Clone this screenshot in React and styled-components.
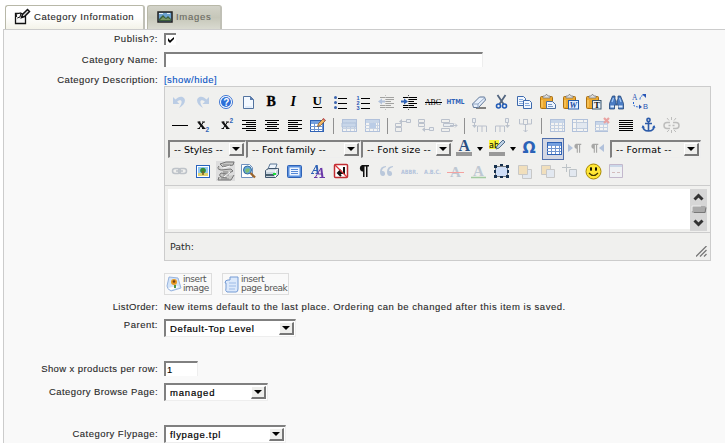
import React from "react";
import styled, { createGlobalStyle } from "styled-components";

const Global = createGlobalStyle`
  * { box-sizing: border-box; }
  html, body { margin: 0; background: #fff; overflow: hidden; }
  svg { display: block; flex: none; }
`;
const Page = styled.main`
  width: 725px;
  height: 443px;
  overflow: hidden;
  padding: 5px 0 0 3px;
  display: flex;
  flex-direction: column;
  font: 9.5px "Liberation Sans", Arial, sans-serif;
  letter-spacing: 0.5px;
  color: #2a2a2a;
  -webkit-text-stroke: 0.12px currentColor;
`;
const Tabs = styled.nav`
  display: flex;
  gap: 2px;
  height: 24px;
  padding-left: 2px;
`;
const Tab = styled.div`
  width: ${(p) => p.$w}px;
  height: 24px;
  display: flex;
  align-items: center;
  gap: ${(p) => p.$gap}px;
  padding-left: ${(p) => (p.$active ? 8 : 9)}px;
  padding-bottom: 2px;
  white-space: nowrap;
  letter-spacing: ${(p) => p.$spacing}px;
  border: 1px solid #b8b8a8;
  border-right: 2px solid #c0c0b6;
  border-bottom: 0;
  border-radius: 3px 3px 0 0;
  color: ${(p) => (p.$active ? "#2a2a2a" : "#6a6a62")};
  background: ${(p) => (p.$active ? "linear-gradient(#fff, #fff 45%, #f4f3e9)" : "linear-gradient(#d3d3c9, #c6c7b9 50%, #d9dad0)")};
`;
const Panel = styled.section`
  flex: 1;
  border: solid #ccc;
  border-width: 1px 0 0 1px;
  background: #f9f9f9;
  display: flex;
  flex-direction: column;
`;
const Row = styled.div`
  display: grid;
  grid-template-columns: 154px 1fr;
  column-gap: 6px;
  flex: none;
  height: ${(p) => p.$h}px;
`;
const Label = styled.label`
  text-align: right;
  line-height: 12px;
  padding-top: ${(p) => p.$top || 0}px;
  letter-spacing: ${(p) => p.$spacing ?? 0.5}px;
  white-space: nowrap;
`;
const Field = styled.div`
  padding-top: ${(p) => p.$top || 0}px;
  line-height: 12px;
  letter-spacing: ${(p) => p.$spacing ?? 0.52}px;
  white-space: nowrap;
`;
const Check = styled.div`
  width: 12px;
  height: 12px;
  background: #fff;
  border: solid #808080;
  border-width: 2px 0 0 2px;
`;
const TextBox = styled.div`
  width: ${(p) => p.$w}px;
  height: 15px;
  padding: 1px 1px 0;
  line-height: 12px;
  color: #000;
  background: #fff;
  border: 2px solid #808080;
  border-right: 1px solid #eee;
  border-bottom: 0;
`;
const Link = styled.a`
  color: #0b55c4;
`;
const SelectBox = styled.div`
  flex: none;
  width: ${(p) => p.$w}px;
  height: 18px;
  display: flex;
  align-items: center;
  justify-content: space-between;
  padding-left: 4px;
  color: #000;
  background: ${(p) => (p.$flat ? "#f0f0ee" : "#fff")};
  border: 2px solid #808080;
  border-right: 1px solid #eee;
  border-bottom: 1px solid #eee;
  font-family: ${(p) => (p.$flat ? '"DejaVu Sans", Verdana, sans-serif' : "inherit")};
  letter-spacing: ${(p) => p.$spacing}px;
  -webkit-text-stroke-width: ${(p) => (p.$flat ? 0 : 0.2)}px;
`;
const ArrowButton = styled.span`
  width: 15px;
  height: 13px;
  margin-right: 1px;
  display: flex;
  align-items: center;
  justify-content: center;
  background: #eeeeec;
  border: 1px solid #fff;
  border-right: 2px solid #777;
  border-bottom: 2px solid #777;
`;
const Editor = styled.div`
  width: 547px;
  height: 175px;
  border: 1px solid #ccc;
  background: #f0f0ee;
  display: flex;
  flex-direction: column;
`;
const Toolbar = styled.div`
  height: 98px;
  padding: 4px 0 0 3px;
`;
const ToolRow = styled.div`
  display: flex;
  height: 23px;
  align-items: center;
`;
const Tool = styled.span`
  width: 23px;
  height: 23px;
  flex: none;
  opacity: ${(p) => (p.$off ? 0.32 : 1)};
  -webkit-text-stroke-width: 0;
  letter-spacing: 0;
`;
const Split = styled.span`
  width: 8px;
  height: 16px;
  display: flex;
  justify-content: center;
  &::before { content: ""; width: 1px; background: #909090; }
`;
const Drop = styled.span`
  width: 7px;
  margin-right: 3px;
  display: flex;
  justify-content: center;
`;
const ActiveTool = styled.span`
  width: 22px;
  height: 22px;
  flex: none;
  display: flex;
  align-items: center;
  justify-content: center;
  overflow: hidden;
  border: 1px solid #506fac;
  background: #d3d7e3;
`;
const EditArea = styled.div`
  height: 48px;
  padding: 3px;
  border: solid #ccc;
  border-width: 1px 0;
  display: flex;
`;
const Canvas = styled.div`
  flex: 1;
  background: #fff;
`;
const Status = styled.div`
  flex: 1;
  display: flex;
  justify-content: space-between;
  padding: 8px 3px 3px 5px;
  font: 9.5px/11px "DejaVu Sans", sans-serif;
  letter-spacing: 0;
  -webkit-text-stroke-width: 0;
`;
const Grip = styled.span`
  align-self: flex-end;
`;
const Inserts = styled.div`
  display: flex;
  gap: 10px;
  padding: 12px 0 0 160px;
  height: 39px;
  flex: none;
`;
const InsertButton = styled.button`
  width: ${(p) => p.$w}px;
  height: 22px;
  padding: 0 0 1px 1px;
  display: flex;
  align-items: center;
  gap: 1px;
  border: 1px solid #ddd;
  background: #f9f9f9;
  color: #555;
  text-align: left;
  white-space: pre;
  font: 9px/9px "DejaVu Sans", sans-serif;
  letter-spacing: -0.45px;
  -webkit-text-stroke-width: 0;
`;

const Triangle = ({ w = 8 }) => (
  <svg width={w} height="4" viewBox="0 0 8 4" preserveAspectRatio="none"><path d="M0 0h8L4 4z" fill="#000" /></svg>
);
const Select = ({ children, ...rest }) => (
  <SelectBox {...rest}>{children}<ArrowButton><Triangle /></ArrowButton></SelectBox>
);

const B = "#2f62b5";
const L = "#c5daf7";
const hlines = (list, color = "#000") => list.map(([x, y, w], i) => <rect key={i} x={x} y={y} width={w} height="1" fill={color} shapeRendering="crispEdges" />);
const grid = (x = 5, y = 6, w = 14, h = 12) => (
  <g>
    <rect x={x + 0.5} y={y + 0.5} width={w} height={h} fill="#fff" stroke={B} />
    <path d={`M${x + 1} ${y + 1}h${w - 1}v3h-${w - 1}z`} fill="#75a0df" />
    <path d={`M${x + 4.5} ${y + 3}v${h - 3}m4-${h - 3}v${h - 3}m4-${h - 3}v${h - 3}M${x} ${y + 6.5}h${w}m0 3h-${w}`} stroke="#6f94cf" fill="none" />
  </g>
);
const board = (
  <g>
    <rect x="4.5" y="5.5" width="12" height="12" rx="1" fill="#eda92f" stroke="#a96f12" />
    <path d="M7 6.5V5h2l1-1.5h1L12 5h2v2H7z" fill="#ddd" stroke="#777" strokeWidth=".7" />
    <path d="M6 9v7" stroke="#ffd677" />
  </g>
);
const pilcrow = <path d="M17 5H10a3.500 3.500 0 0 0 0 6.500h1V17h1.500V6.500H14V17h1.500V6.500H17z" fill="#111" />;
const cells = (rest) => <g fill="#dce9fa" stroke="#4c6187">{rest}</g>;

const art = {
  undo: <path d="M5 6v7h6.500l-2.400-2.200C13 7.500 16 10 11 17c6-3 8-9 3.500-11-2.500-.8-5 .4-7 2.600z" fill="#4e86d4" />,
  redo: <path d="M18 6v7h-6.500l2.400-2.200C10 7.500 7 10 12 17c-6-3-8-9-3.500-11 2.500-.8 5 .4 7 2.600z" fill="#4e86d4" />,
  help: <g><circle cx="12" cy="11" r="6.500" fill="#fff" stroke="#3d74d2" /><circle cx="12" cy="11" r="5" fill="#2d6fd8" /><text x="9.200" y="14.800" fontSize="10" fontWeight="bold" fill="#fff">?</text></g>,
  doc: <g><path d="M6.500 5.500h7l3 3v9h-10z" fill="#f4f9ff" stroke="#53739f" /><path d="M13 5v4h4z" fill="#5c7dad" /><path d="M8 16h7" stroke="#cfe0f5" /></g>,
  bold: <text x="6.500" y="15" fontFamily="Liberation Serif" fontSize="14" fontWeight="bold" fill="#000" stroke="#000" strokeWidth=".3">B</text>,
  italic: <text x="7.500" y="15" fontFamily="Liberation Serif" fontSize="14" fontStyle="italic" fontWeight="bold" fill="#000">I</text>,
  under: <g><text x="6.500" y="14" fontFamily="Liberation Serif" fontSize="13" fontWeight="bold" fill="#000">U</text>{hlines([[7, 16, 9]])}</g>,
  ul: <g>{hlines([[9, 7, 9], [9, 12, 9], [9, 17, 9]])}<g fill="#3c64ae"><circle cx="6.500" cy="6.500" r="1.500" /><circle cx="6.500" cy="11.500" r="1.500" /><circle cx="6.500" cy="16.500" r="1.500" /></g></g>,
  ol: <g>{hlines([[9, 7, 9], [9, 12, 9], [9, 17, 9]])}<g fontSize="5.500" fontWeight="bold" fill="#2855b5"><text x="4.500" y="8.500">1</text><text x="4.500" y="13.500">2</text><text x="4.500" y="18.500">3</text></g></g>,
  outdent: <g>{hlines([[5, 6, 14], [11, 8, 8], [11, 10, 5], [11, 12, 8], [5, 14, 11], [5, 16, 14]])}<path d="M3 10.500l4-3v2h3v2H7v2z" fill={B} /><path d="M10.500 4v15" stroke="#555" strokeDasharray="1" /></g>,
  indent: <g>{hlines([[5, 6, 14], [11, 8, 8], [11, 10, 5], [11, 12, 8], [5, 14, 11], [5, 16, 14]])}<path d="M10 10.500l-4-3v2H3v2h3v2z" fill={B} /><path d="M10.500 4v15" stroke="#555" strokeDasharray="1" /></g>,
  strike: <g><text x="4" y="14" fontFamily="Liberation Serif" fontSize="8.500" textLength="16" lengthAdjust="spacingAndGlyphs" fill="#000">ABC</text>{hlines([[4, 11, 17]])}</g>,
  html: <text x="2.500" y="13" fontFamily="DejaVu Sans" fontSize="7" fontWeight="bold" textLength="18" lengthAdjust="spacingAndGlyphs" fill="#2d62b8">HTML</text>,
  eraser: <g><path d="M9 17h10" stroke="#111" /><path d="M5.500 13l7-7h5l1 3-7 7.500h-5z" fill="#e7f0fc" stroke="#5e7596" /><path d="M5.500 13h5.500l7-6.500M11 13v3.500" fill="none" stroke="#8fa5c3" /></g>,
  cut: <g fill="none"><path d="M7.500 4l6 9M15.500 4l-6 9" stroke="#52657f" strokeWidth="1.800" /><circle cx="8.500" cy="15" r="2" stroke="#225cb7" strokeWidth="1.600" /><circle cx="14.500" cy="15" r="2" stroke="#225cb7" strokeWidth="1.600" /></g>,
  copy: <g fill="#f2f8ff" stroke="#3d69ac"><path d="M4.500 5.500h6l2 2v7h-8z" /><path d="M6 8.500h4m-4 2h4m-4 2h4" stroke="#86a9dc" /><path d="M10.500 9.500h6l2 2v6h-8z" /><path d="M12 12.500h4m-4 2h5" stroke="#86a9dc" /></g>,
  paste: <g>{board}<path d="M10.500 10.500h6l3 3v4h-9z" fill="#edf5ff" stroke="#4b6d9e" /><path d="M12 13.500h4m-4 2h5" stroke="#7897c2" /></g>,
  word: <g>{board}<rect x="9.500" y="9.500" width="10" height="8.500" fill="#e5f0ff" stroke="#245dac" /><text x="10.500" y="17" fontFamily="Liberation Serif" fontSize="8.500" fontWeight="bold" fontStyle="italic" fill="#164c9f">W</text></g>,
  plain: <g>{board}<rect x="10.500" y="9.500" width="8.500" height="8.500" fill="#edf2f7" stroke="#38536b" /><text x="12" y="17" fontFamily="Liberation Serif" fontSize="9" fontWeight="bold" fill="#111">T</text></g>,
  find: <g fill="#4a7cc4" stroke="#234679" strokeWidth=".8"><path d="M7.500 5h2.500v3l1 2v3h1v-3l1-2V5h2.500l3 7.500V18h-5v-4h-4v4h-5v-5.500z" /><path d="M5.500 15.500h3.500m4.500 0h4" stroke="#d8e9ff" strokeWidth="2" /><path d="M7 11l1.500-4m6 0l1.500 4" stroke="#a5caf6" strokeWidth="1.200" /></g>,
  replace: <g fill="#2855b5"><text x="4" y="9" fontFamily="Liberation Serif" fontSize="7.500">A</text><text x="15" y="18" fontSize="7.500">B</text><path d="M12 8.500q0-4 4-4M5.500 11v3q1 2 7 2" fill="none" stroke="#2263d2" strokeDasharray="2 1" /><path d="M14 3h4v4zM11 13.500l3 2.500-3 2z" /></g>,
  hr: hlines([[4, 11, 16]]),
  sub: <g><path d="M6.500 8h3m1.500 0h3M6.500 14.500h2.500m2 0h3.500" stroke="#111" /><path d="M7.500 8l5.500 6.500" stroke="#111" strokeWidth="2" /><path d="M12.500 8L8 14.500" stroke="#111" /><text x="14.500" y="18" fontSize="6.500" fontWeight="bold" fill={B}>2</text></g>,
  sup: <g><path d="M7.500 8h3m1.500 0h3M7.500 14.500h2.500m2 0h3.500" stroke="#111" /><path d="M8.500 8l5.500 6.500" stroke="#111" strokeWidth="2" /><path d="M13.500 8L9 14.500" stroke="#111" /><text x="15.500" y="9" fontSize="6.500" fontWeight="bold" fill={B}>2</text></g>,
  right: hlines([[5, 6, 14], [9, 8, 10], [5, 10, 14], [9, 12, 10], [5, 14, 14], [9, 16, 10]]),
  center: hlines([[5, 6, 14], [7, 8, 10], [5, 10, 14], [7, 12, 10], [5, 14, 14], [7, 16, 10]]),
  left: hlines([[5, 6, 14], [5, 8, 10], [5, 10, 14], [5, 12, 10], [5, 14, 14], [5, 16, 10]]),
  full: hlines([[5, 6, 14], [5, 8, 14], [5, 10, 14], [5, 12, 14], [5, 14, 14], [5, 16, 14]]),
  tableEdit: <g>{grid(4, 6, 13, 11)}<path d="M11.500 12.500l1-3 5-5 2 2-5 5z" fill="#efb664" stroke="#7c5535" strokeWidth=".8" /><path d="M17 4.500l2 2" stroke="#cc5a61" strokeWidth="1.500" /></g>,
  rowProp: <g>{grid(5, 5, 14, 12)}<path d="M5 9h14v4H5z" fill="#75a0df" stroke={B} /></g>,
  cellProp: <g>{grid(5, 5, 14, 12)}<path d="M10 9h6v5h-6z" fill="#4c83d6" /></g>,
  before: cells(<><path d="M4.500 9.500h6v3h-6zm0 4h6v4h-6zM11 7.500h4" fill="none" /><path d="M15.500 5.500h4v3h-4z" /><path d="M11 5v5L8 7.500z" fill="#4c6187" stroke="none" /></>),
  after: cells(<><path d="M4.500 5.500h6v3h-6zm0 4h6v3h-6zM11 15.500h4" fill="none" /><path d="M15.500 13.500h4v3h-4z" /><path d="M11 13v5l-3-2.500z" fill="#4c6187" stroke="none" /></>),
  rowDel: cells(<><path d="M4.500 5.500h8v3h-8zm0 9h8v3h-8z" fill="none" /><path d="M6.500 9.500h10v3h-10z" /><path d="M13 11.500h7m-2-2l2 2-2 2" fill="none" /></>),
  colBefore: cells(<><path d="M9.500 18v-6h4.500v6m0-6h4.500v6" fill="none" /><path d="M4.500 4.500h3v4h-3zM6.500 9v3" /><path d="M4 11h5l-2.500 3z" fill="#4c6187" stroke="none" /></>),
  colAfter: cells(<><path d="M4.500 18v-6h4.500v6m0-6h4.500v6" fill="none" /><path d="M14.500 4.500h3v4h-3zM16.500 9v3" /><path d="M14 11h5l-2.500 3z" fill="#4c6187" stroke="none" /></>),
  colDel: cells(<><path d="M5.500 5v5h4V5m4 0v5h4V5" fill="none" /><path d="M9.500 5.500h4v5h-4zM11.500 11v7m-2-2l2 2 2-2" fill="none" /></>),
  table: grid(5, 5, 14, 12),
  merge: <g><rect x="4.500" y="5.500" width="15" height="12" fill="#fff" stroke={B} /><path d="M5 8.500h14M8.500 6v11M15.500 6v3m0 6v3M5 14.500h14" stroke="#6085bd" /><path d="M9 9h10v5H9z" fill="#c5daf7" /></g>,
  tableDel: <g>{grid(4, 7, 12, 10)}<path d="M13 4l5 5m0-5l-5 5" stroke="#d00" strokeWidth="2.200" /></g>,
  anchor: <g fill="none" stroke="#2b5aa8" strokeWidth="1.600"><circle cx="11.500" cy="6" r="1.600" /><path d="M11.500 8v9M8 9.500h7M6 12q0 5 5.500 5t5.500-5" /><path d="M4.500 14l1.300-3 2.200 2.500M15 13.500l2.200-2.500 1.300 3" fill={B} stroke="none" /></g>,
  unlink: <g fill="none" stroke="#555" strokeWidth="1.500"><path d="M10 8.500H7a3 3 0 0 0 0 6h3M13 8.500h3a3 3 0 0 1 0 6h-3M8.500 11.500h2m2 0h2" /><path d="M11.500 3v3M7 4l2 2.500M16 4l-2 2.500M11.500 16v3M7 18l2-2M16 18l-2-2" strokeWidth="1" /></g>,
  link: <g fill="none" stroke="#56677d" strokeWidth="1.500"><rect x="4.500" y="8.500" width="8" height="5" rx="2.500" /><rect x="10.500" y="8.500" width="8" height="5" rx="2.500" /><path d="M8 11h7" /></g>,
  image: <g><rect x="5.500" y="5.500" width="13" height="12" fill="#fff" stroke="#2862bd" /><path d="M7 7h10v9H7z" fill="#91c8f1" /><path d="M7 13h10v3H7z" fill="#dfd36d" /><circle cx="12" cy="10.500" r="2.800" fill="#368e39" /><path d="M12 11v4" stroke="#7c5d25" strokeWidth="1.500" /></g>,
  cleanup: <g><path d="M2 1h19v20H2z" fill="#ddd" /><path d="M6 4q5-3 14-2l-1 3-10 2zM5 6q-3 3 2 4l10-1 2 2-6 3-6-1q-3 2 0 4l6 1M5 17l-1 3h13l3-5" fill="#c8c8c6" stroke="#777" /><path d="M9 5h8m-8 7h5m-5 3h6M7 19h8" fill="none" stroke="#888" /><path d="M9 8l7-2M10 17l6-5" stroke="#fff" /></g>,
  preview: <g><path d="M4.500 4.500h8l3 3v10h-11z" fill="#fff" stroke="#6f91be" /><circle cx="10.500" cy="10" r="4" fill="#63a8dc" stroke="#376c99" /><path d="M8 10q2-3 5-1l-1 3-3 1z" fill="#7fbd75" /><path d="M13.500 13l4.500 4.500" stroke="#9b642b" strokeWidth="2.300" /></g>,
  print: <g><path d="M8 9l2-5h7l-2 6z" fill="#eef5fc" stroke="#5c7897" /><path d="M5.500 10.500l3-2h10v6l-3 3h-10z" fill="#c9d4de" stroke="#40566d" /><path d="M6 11h9l3-2M15.500 11v6" stroke="#fff" fill="none" /><path d="M6 14h8v2H6z" fill="#48606e" /><rect x="13" y="13" width="3" height="2" fill="#19dc36" /></g>,
  layer: <g><rect x="4.500" y="5.500" width="14" height="12" rx="1" fill="#5b91df" stroke={B} /><rect x="6.500" y="7.500" width="10" height="8" fill="#eef5ff" />{hlines([[8, 9, 7], [8, 11, 7], [8, 13, 7]], "#5588d6")}</g>,
  style: <g fill="none"><path d="M5 13.500h3m1.500 0h3.500M6 13l4.500-8M7.500 10.500h4" stroke="#2f62b5" /><path d="M10.700 5l1 8.500" stroke="#2f62b5" strokeWidth="2" /><path d="M8 17.500h3.500m2 0h5.500M9.500 17l5.500-9M12 14h4" stroke="#6a38a8" /><path d="M15.200 8l1.300 9.500" stroke="#6a38a8" strokeWidth="2" /></g>,
  nonbreak: <g><rect x="5.500" y="4.500" width="13" height="13" rx="1" fill="#fff" stroke="#c12d32" strokeWidth="1.500" /><path d="M15 7v6H9m3-3l-3 3 3 3" fill="none" stroke="#111" strokeWidth="2" /><path d="M6 5l12 12" stroke="#db3438" strokeWidth="1.300" /></g>,
  para: pilcrow,
  quote: <g fill="#4b76b5"><path d="M11 6q-6 0-6 6 0 4 3 4a2.500 2.500 0 1 0-1-5q0-3 4-4zM18 6q-6 0-6 6 0 4 3 4a2.500 2.500 0 1 0-1-5q0-3 4-4z" /></g>,
  abbr: <text x="3" y="14" fontFamily="DejaVu Sans" fontSize="6" fontWeight="bold" textLength="17" lengthAdjust="spacingAndGlyphs" fill={B}>ABBR.</text>,
  acro: <text x="3" y="14" fontFamily="DejaVu Sans" fontSize="6" fontWeight="bold" textLength="17" lengthAdjust="spacingAndGlyphs" fill={B}>A.B.C.</text>,
  del: <g><text x="6" y="17" fontFamily="Liberation Serif" fontSize="15" fontWeight="bold" fill="#57779c">A</text><path d="M3 12.500h17" stroke="red" /></g>,
  ins: <g><text x="6" y="16" fontFamily="Liberation Serif" fontSize="15" fontWeight="bold" fill="#57779c">A</text><path d="M4 17.500h15" stroke="green" strokeWidth="1.500" /></g>,
  attrs: <g><path d="M5.500 6.500h12v10h-12z" fill="#cfdef7" stroke="#111" strokeDasharray="1 1" /><path d="M4 5h3v3H4zm6-1h3v2h-3zm6 1h3v3h-3zM4 10h2v3H4zm13 0h2v3h-2zM4 15h3v3H4zm6 1h3v2h-3zm6-1h3v3h-3z" fill="#16304e" /></g>,
  front: <g stroke="#777"><path d="M9.500 9.500h9v9h-9z" fill={L} /><path d="M5.500 5.500h9v9h-9z" fill="#f4be55" /></g>,
  back: <g stroke="#777"><path d="M5.500 5.500h9v9h-9z" fill="#f4be55" /><path d="M10.500 9.500h8v8h-8z" fill={L} /></g>,
  addLayer: <g stroke="#567" fill={L}><path d="M3 7.500h9M7.500 4v8" /><path d="M10.500 9.500h7v7h-7z" /></g>,
  smile: <g><circle cx="11.500" cy="11.500" r="7.500" fill="#ffe635" stroke="#a88800" /><ellipse cx="9" cy="9" rx="1" ry="2" /><ellipse cx="14" cy="9" rx="1" ry="2" /><path d="M7 13q4.500 5 9 0" fill="none" stroke="#443900" strokeWidth="1.200" /></g>,
  pagebreak: <g><path d="M4.500 4.500h13v13h-13z" fill="#eef4ff" stroke="#648" /><path d="M5 6h12" stroke="#7fa7df" strokeWidth="2" /><path d="M7 12.500h3m2 0h3" stroke="#955" /></g>,
  ltr: <g><g transform="translate(4.500 3) scale(.75)">{pilcrow}</g><path d="M4 7l5 4-5 4z" fill={B} /></g>,
  rtl: <g><g transform="translate(-1.500 3) scale(.75)">{pilcrow}</g><path d="M17 7l-5 4 5 4z" fill={B} /></g>,
};

const Icon = ({ name }) => <svg width="23" height="23" viewBox="0 0 23 23" aria-hidden="true">{art[name]}</svg>;
const Tools = ({ list }) => list.split(" ").map((n, i) => n === "|" ? <Split key={i} /> : (
  <Tool key={i} $off={n[0] === "-"}><Icon name={n.replace("-", "")} /></Tool>
));

export default function App() {
  return (
    <>
      <Global />
      <Page>
        <Tabs>
          <Tab $w={140} $active $gap={3} $spacing={0.57}>
            <svg width="17" height="17"><path d="M1.500 5.500h6l4 3v7h-10z" fill="#f6f6f6" stroke="#111" strokeWidth="1.300" /><path d="M2 6l5-1-1 4-3 1z" fill="#fff" stroke="#111" /><path d="M7.500 9.500l1-3 5-5 2 2-5 5z" fill="#ddd" stroke="#111" strokeWidth="1.500" /><path d="M2 10l3-2" stroke="#fff" /></svg>
            Category Information
          </Tab>
          <Tab $w={75} $gap={3} $spacing={0.7}>
            <svg width="16" height="13"><path d="M1 2h14v10H1z" fill="#6da2cf" stroke="#222" strokeWidth="1.500" /><path d="M2 11V9l4-4 3 3 2-2 3 3v2z" fill="#3b5f38" /><path d="M3 10l3-3 3 2 2-1 3 2z" fill="#7b9665" /><path d="M2 3h4v1H2zm8 0h3v1h-3z" fill="#e4eff6" /></svg>
            Images
          </Tab>
        </Tabs>
        <Panel>
          <Row $h={22}>
            <Label $top={3} $spacing={0.55}>Publish?:</Label>
            <Field $top={3}><Check><svg width="10" height="10"><path d="M2 3v3l2 2 4-4V2L4 5.500z" fill="#000" /></svg></Check></Field>
          </Row>
          <Row $h={22}><Label $top={2}>Category Name:</Label><Field><TextBox $w={319} /></Field></Row>
          <Row $h={12}><Label $spacing={0.45}>Category Description:</Label><Field $spacing={0.46}><Link>[show/hide]</Link></Field></Row>
          <Row $h={175}>
            <span />
            <Editor>
              <Toolbar>
                <ToolRow><Tools list="-undo -redo help doc bold italic under ul ol -outdent indent strike html eraser cut copy paste word plain find replace" /></ToolRow>
                <ToolRow><Tools list="hr sub sup right center left tableEdit | -rowProp -cellProp | -before -after -rowDel | -colBefore -colAfter -colDel | -table -merge -tableDel full anchor -unlink" /></ToolRow>
                <ToolRow>
                  <Select $flat $w={78} $spacing={0}>-- Styles --</Select>
                  <Select $flat $w={115} $spacing={0.05}>-- Font family --</Select>
                  <Select $flat $w={92} $spacing={0.12}>-- Font size --</Select>
                  <Tool><svg width="23" height="23"><text x="5.500" y="14" fontFamily="Liberation Serif" fontWeight="bold" fontSize="16" fill="#294f82">A</text><path d="M3 15h16v4H3z" fill="#999" /></svg></Tool>
                  <Drop><Triangle w={6} /></Drop>
                  <Tool><svg width="23" height="23"><path d="M3 3h10v9H3z" fill="#f7f43c" /><text x="3" y="11" fontFamily="DejaVu Sans" fontSize="8" fill="#000">ab</text><path d="M10 12l1-3 6-6 2 2-6 6z" fill="#bed0e4" stroke="#52708f" /><path d="M3 15h16v4H3z" fill="#999" /></svg></Tool>
                  <Drop><Triangle w={6} /></Drop>
                  <Tool><svg width="23" height="23"><text x="3.500" y="16" fontFamily="DejaVu Sans" fontWeight="bold" fontSize="15.500" fill="#2b62b8">Ω</text></svg></Tool>
                  <ActiveTool><Icon name="table" /></ActiveTool>
                  <Tool $off><Icon name="ltr" /></Tool>
                  <Tool $off><Icon name="rtl" /></Tool>
                  <Select $flat $w={91} $spacing={0.2}>-- Format --</Select>
                </ToolRow>
                <ToolRow><Tools list="-link image cleanup preview print layer style nonbreak para -quote -abbr -acro -del -ins attrs -front -back -addLayer smile -pagebreak" /></ToolRow>
              </Toolbar>
              <EditArea>
                <Canvas />
                <svg width="17" height="42"><path d="M0 0h17v42H0z" fill="#d6d6d6" /><path d="M4.500 10.500l4-4 4 4M4.500 31.500l4 4 4-4" fill="none" stroke="#333" strokeWidth="3" /><rect x="2" y="17" width="14" height="7" rx="1.500" fill="#aaa" /><path d="M2 22V17h9" fill="none" stroke="#eee" /><path d="M4 23.500h11l1-5" fill="none" stroke="#777" /></svg>
              </EditArea>
              <Status>Path:<Grip><svg width="11" height="11"><path d="M0 10.500L10.500 0M4 10.500L10.500 4M8 10.500L10.500 8" stroke="#777" strokeWidth="1.300" /></svg></Grip></Status>
            </Editor>
          </Row>
          <Inserts>
            <InsertButton $w={48}>
              <svg width="16" height="18"><path d="M3 2l9 1 3 10-10 3q-4-2-4-5z" fill="#d3e4f8" stroke="#98b4df" /><path d="M2 13l3 2 8-3-2-1z" fill="#fff" /><circle cx="8" cy="7" r="3" fill="#e99922" /><circle cx="8" cy="6.500" r="1.300" fill="#704015" /><path d="M9 10v3" stroke="#509445" strokeWidth="2" /></svg>
              {"insert\nimage"}
            </InsertButton>
            <InsertButton $w={67}>
              <svg width="16" height="18"><path d="M6 2h8v12q0 3-2 3H3q-2-1-1-4V8H1q0-3 3-3h2z" fill="#dce9fb" stroke="#759bd4" /><path d="M5 8h7m-7 3h7m-7 3h6" stroke="#9dbbe7" /></svg>
              {"insert\npage break"}
            </InsertButton>
          </Inserts>
          <Row $h={19}><Label $top={1} $spacing={0.36}>ListOrder:</Label><Field $top={1}>New items default to the last place. Ordering can be changed after this item is saved.</Field></Row>
          <Row $h={42}><Label>Parent:</Label><Field><Select $w={132} $spacing={0.62}>Default-Top Level</Select></Field></Row>
          <Row $h={22}><Label $top={2} $spacing={0.4}>Show x products per row:</Label><Field><TextBox $w={34}>1</TextBox></Field></Row>
          <Row $h={42}><Label $top={3} $spacing={0.41}>Category Browse Page:</Label><Field><Select $w={104} $spacing={0.8}>managed</Select></Field></Row>
          <Row $h={20}><Label $top={3} $spacing={0.46}>Category Flypage:</Label><Field><Select $w={122} $spacing={0.7}>flypage.tpl</Select></Field></Row>
        </Panel>
      </Page>
    </>
  );
}
